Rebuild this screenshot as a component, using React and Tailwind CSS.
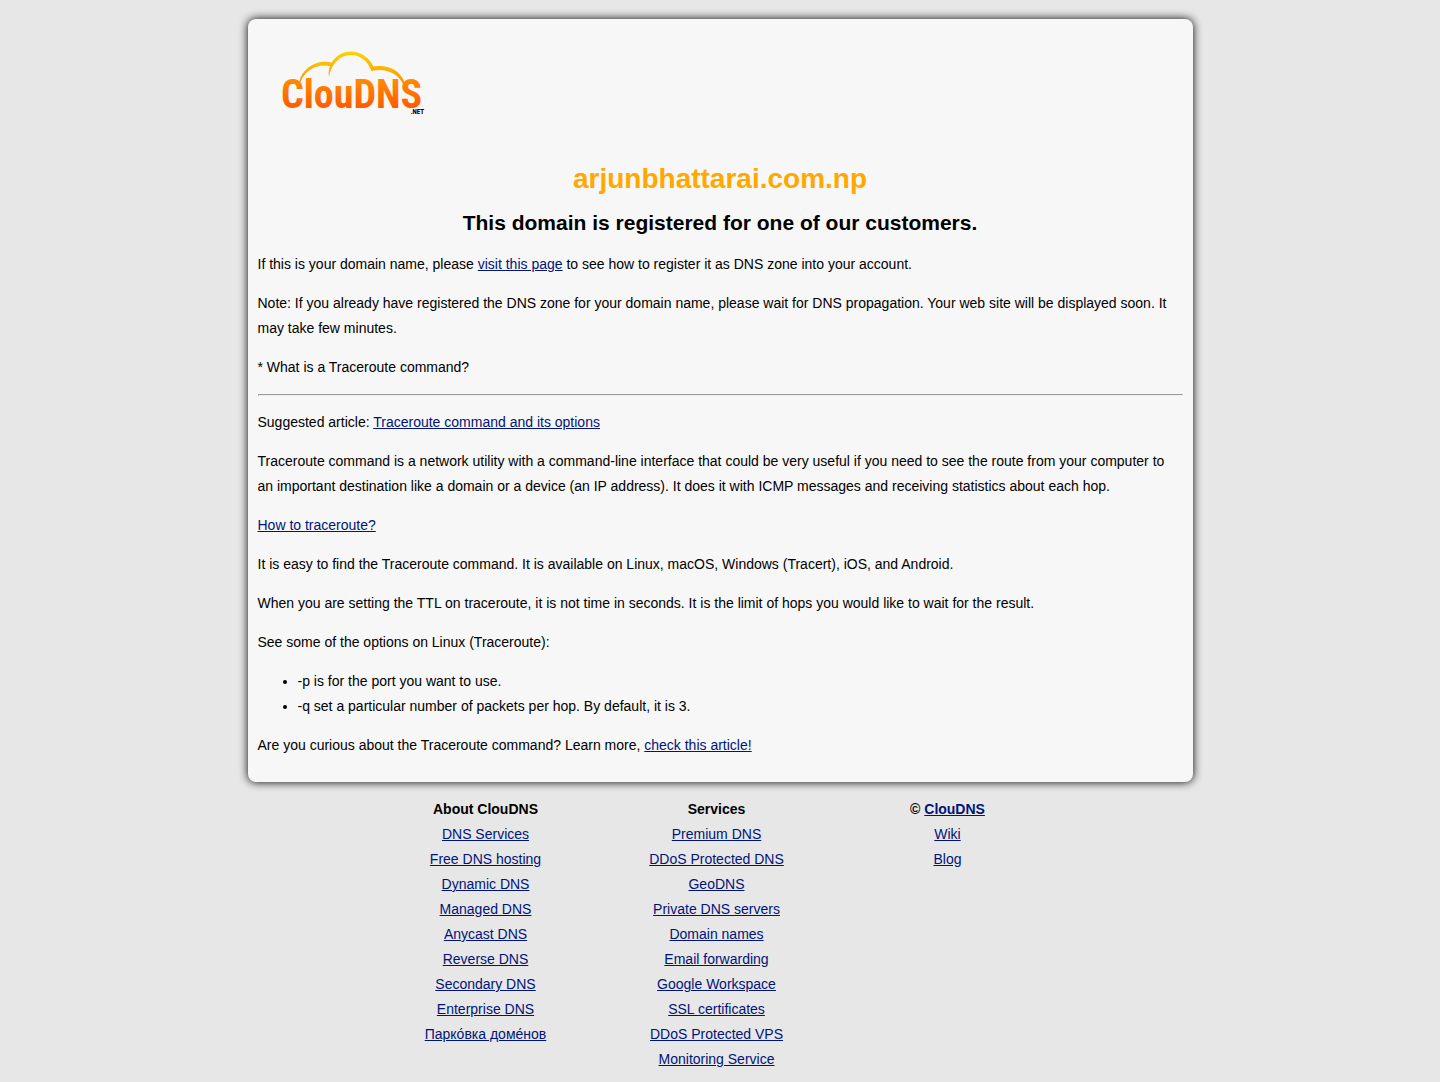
const link = "text-[#00147a] underline";

const about = [
  "DNS Services",
  "Free DNS hosting",
  "Dynamic DNS",
  "Managed DNS",
  "Anycast DNS",
  "Reverse DNS",
  "Secondary DNS",
  "Enterprise DNS",
  "Парко́вка доме́нов",
];

const services = [
  "Premium DNS",
  "DDoS Protected DNS",
  "GeoDNS",
  "Private DNS servers",
  "Domain names",
  "Email forwarding",
  "Google Workspace",
  "SSL certificates",
  "DDoS Protected VPS",
  "Monitoring Service",
];

function A({ children }) {
  return (
    <a href="#" className={link}>
      {children}
    </a>
  );
}

function Logo() {
  return (
    <svg width="150" height="70" viewBox="278 48 150 70" role="img" aria-label="ClouDNS.net">
      <defs>
        <linearGradient id="cloud" gradientUnits="userSpaceOnUse" x1="0" y1="51" x2="0" y2="84">
          <stop offset="0" stopColor="#ffd400" />
          <stop offset="1" stopColor="#f99500" />
        </linearGradient>
        <linearGradient id="word" gradientUnits="userSpaceOnUse" x1="0" y1="80" x2="0" y2="108">
          <stop offset="0" stopColor="#ff8a00" />
          <stop offset="1" stopColor="#ff5a00" />
        </linearGradient>
      </defs>
      <g fill="url(#cloud)">
        <path d="M299 82C303 67 318 58.500 333 63L331 66.500C318 63 305 70 300.500 82Z" />
        <path d="M329 77C327 64 337 51.500 351 51.500C361 51.500 370 58 373.500 67L371.500 71C368 61 360 55 351 55C340 55 331 64 329 77Z" />
        <path d="M371 67.500C384 63 401 69 405 84L403 84C398 73 385 67.500 371.500 71Z" />
      </g>
      <text
        x="281"
        y="108"
        fill="url(#word)"
        className="font-['Roboto_Condensed','Roboto','Liberation_Sans',sans-serif] text-[40px] font-bold"
      >
        ClouDNS
      </text>
      <text
        x="424"
        y="114"
        textAnchor="end"
        className="fill-black font-['Roboto_Condensed','Liberation_Sans',sans-serif] text-[7px] font-bold"
      >
        .NET
      </text>
    </svg>
  );
}

function Column({ title, items }) {
  return (
    <div>
      <h3 className="font-bold">{title}</h3>
      <ul>
        {items.map((item) => (
          <li key={item}>
            <A>{item}</A>
          </li>
        ))}
      </ul>
    </div>
  );
}

export default function App() {
  return (
    <div className="min-h-screen bg-[#e7e7e7] px-4 pt-[19px] pb-2 font-['Liberation_Sans',Arial,sans-serif] text-[14px] leading-[25px] text-black">
      <main className="mx-auto max-w-[945px] rounded-lg bg-[#f7f7f7] px-[10px] pt-[29px] pb-6 shadow-[0_0_10px_#000]">
        <header className="px-5">
          <a href="#" className="inline-block align-top">
            <Logo />
          </a>
        </header>
        <h1 className="mt-12 text-center text-[28px] leading-[25px] font-bold text-[#ffa800]">arjunbhattarai.com.np</h1>
        <h2 className="mt-[19px] mb-[17px] text-center text-[21px] leading-[25px] font-bold">
          This domain is registered for one of our customers.
        </h2>
        <div className="flex flex-col gap-[14px]">
          <p>
            If this is your domain name, please <A>visit this page</A> to see how to register it as DNS zone into your
            account.
          </p>
          <p>
            Note: If you already have registered the DNS zone for your domain name, please wait for DNS propagation.
            Your web site will be displayed soon. It may take few minutes.
          </p>
          <p>* What is a Traceroute command?</p>
          <hr className="border border-t-[#9a9a9a] border-r-[#eee] border-b-[#eee] border-l-[#9a9a9a]" />
          <p>
            Suggested article: <A>Traceroute command and its options</A>
          </p>
          <p>
            Traceroute command is a network utility with a command-line interface that could be very useful if you need
            to see the route from your computer to an important destination like a domain or a device (an IP address).
            It does it with ICMP messages and receiving statistics about each hop.
          </p>
          <p>
            <A>How to traceroute?</A>
          </p>
          <p>
            It is easy to find the Traceroute command. It is available on Linux, macOS, Windows (Tracert), iOS, and
            Android.
          </p>
          <p>
            When you are setting the TTL on traceroute, it is not time in seconds. It is the limit of hops you would
            like to wait for the result.
          </p>
          <p>See some of the options on Linux (Traceroute):</p>
          <ul className="list-disc pl-10">
            <li>-p is for the port you want to use.</li>
            <li>-q set a particular number of packets per hop. By default, it is 3.</li>
          </ul>
          <p>
            Are you curious about the Traceroute command? Learn more, <A>check this article!</A>
          </p>
        </div>
      </main>
      <footer className="mx-auto mt-[15px] grid max-w-[700px] grid-cols-3 pr-[7px] text-center">
        <Column title="About ClouDNS" items={about} />
        <Column title="Services" items={services} />
        <Column
          title={
            <>
              © <A>ClouDNS</A>
            </>
          }
          items={["Wiki", "Blog"]}
        />
      </footer>
    </div>
  );
}
